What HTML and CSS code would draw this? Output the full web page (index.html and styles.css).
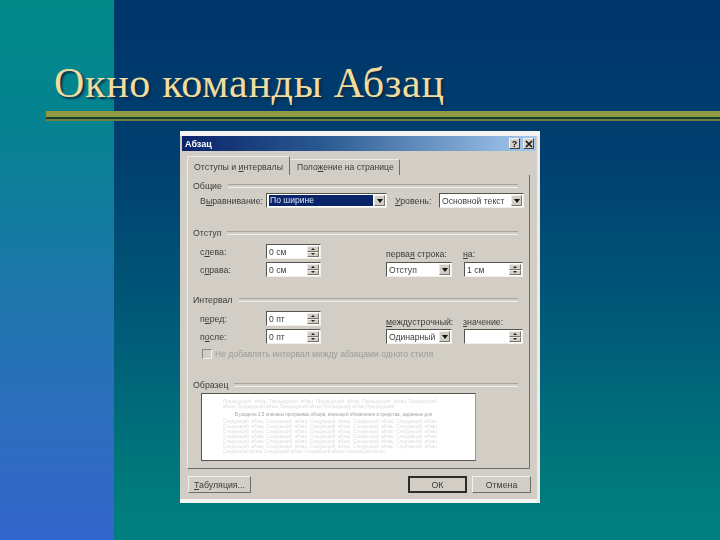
FILE: index.html
```html
<!DOCTYPE html>
<html lang="ru">
<head>
  <meta charset="UTF-8" />
  <title>Окно команды Абзац</title>
  <link rel="stylesheet" href="styles.css">
</head>

<body>
  <main class="slide">
    <div class="strip"></div>

    <div class="slide-content">
      <h1 class="slide-title">Окно команды Абзац</h1>
      <div class="rule"></div>

      <!-- Dialog -->
      <section class="dialog">
        <header class="titlebar">
          <span class="titlebar-text">Абзац</span>
          <span class="title-btn">?</span>
          <span class="title-btn title-close">
            <svg width="8" height="8" viewBox="0 0 8 8"><path d="M1 1 L7 7 M7 1 L1 7" stroke="#111" stroke-width="1.6" /></svg>
          </span>
        </header>

        <nav class="tabs">
          <span class="tab tab-active">Отступы и <u>и</u>нтервалы</span>
          <span class="tab">Поло<u>ж</u>ение на странице</span>
        </nav>

        <div class="panel">
          <!-- Общие -->
          <div class="group group-common">
            <div class="legend"><span>Общие</span></div>
            <div class="row-common">
              <label class="label-align">В<u>ы</u>равнивание:</label>
              <div class="combo combo-align">
                <span class="combo-value selected">По ширине</span>
                <span class="arrow"></span>
              </div>
              <label class="label-level"><u>У</u>ровень:</label>
              <div class="combo combo-level">
                <span class="combo-value">Основной текст</span>
                <span class="arrow"></span>
              </div>
            </div>
          </div>

          <!-- Отступ -->
          <div class="group group-indent">
            <div class="legend"><span>Отступ</span></div>
            <div class="fields">
              <div class="fields-left">
                <div class="field">
                  <label>с<u>л</u>ева:</label>
                  <div class="spin"><span class="spin-value">0 см</span><span class="spin-btns"><i class="up"></i><i class="down"></i></span></div>
                </div>
                <div class="field">
                  <label>с<u>п</u>рава:</label>
                  <div class="spin"><span class="spin-value">0 см</span><span class="spin-btns"><i class="up"></i><i class="down"></i></span></div>
                </div>
              </div>
              <div class="fields-right">
                <div class="captions">
                  <label class="caption-first">перва<u>я</u> строка:</label>
                  <label><u>н</u>а:</label>
                </div>
                <div class="controls">
                  <div class="combo combo-small">
                    <span class="combo-value">Отступ</span>
                    <span class="arrow"></span>
                  </div>
                  <div class="spin"><span class="spin-value">1 см</span><span class="spin-btns"><i class="up"></i><i class="down"></i></span></div>
                </div>
              </div>
            </div>
          </div>

          <!-- Интервал -->
          <div class="group group-spacing">
            <div class="legend"><span>Интервал</span></div>
            <div class="fields">
              <div class="fields-left">
                <div class="field">
                  <label>п<u>е</u>ред:</label>
                  <div class="spin"><span class="spin-value">0 пт</span><span class="spin-btns"><i class="up"></i><i class="down"></i></span></div>
                </div>
                <div class="field">
                  <label>п<u>о</u>сле:</label>
                  <div class="spin"><span class="spin-value">0 пт</span><span class="spin-btns"><i class="up"></i><i class="down"></i></span></div>
                </div>
              </div>
              <div class="fields-right fields-right-low">
                <div class="captions">
                  <label class="caption-first"><u>м</u>еждустрочный:</label>
                  <label><u>з</u>начение:</label>
                </div>
                <div class="controls">
                  <div class="combo combo-small">
                    <span class="combo-value">Одинарный</span>
                    <span class="arrow"></span>
                  </div>
                  <div class="spin"><span class="spin-value"></span><span class="spin-btns"><i class="up"></i><i class="down"></i></span></div>
                </div>
              </div>
            </div>
            <div class="check-row">
              <span class="checkbox"></span>
              <span class="check-text">Не добавлять интервал между абзацами одного стиля</span>
            </div>
          </div>

          <!-- Образец -->
          <div class="group">
            <div class="legend"><span>Образец</span></div>
            <div class="preview">
              <p class="preview-prev">Предыдущий абзац Предыдущий абзац Предыдущий абзац Предыдущий абзац Предыдущий абзац Предыдущий абзац Предыдущий абзац Предыдущий абзац Предыдущий</p>
              <p class="preview-cur">В разделе 2.5 описаны программы обзора, имеющей обновления и средства, заданные для</p>
              <p class="preview-next">Следующий абзац Следующий абзац Следующий абзац Следующий абзац Следующий абзац Следующий абзац Следующий абзац Следующий абзац Следующий абзац Следующий абзац Следующий абзац Следующий абзац Следующий абзац Следующий абзац Следующий абзац Следующий абзац Следующий абзац Следующий абзац Следующий абзац Следующий абзац Следующий абзац Следующий абзац Следующий абзац Следующий абзац Следующий абзац Следующий абзац Следующий абзац Следующий абзац Следующий абзац Следующий абзац Следующий абзац Следующий абзац Следующий абзац Следующий абзац</p>
            </div>
          </div>
        </div>

        <footer class="dialog-footer">
          <button class="btn btn-tabs"><u>Т</u>абуляция...</button>
          <button class="btn btn-default">ОК</button>
          <button class="btn">Отмена</button>
        </footer>
      </section>
    </div>
  </main>
</body>
</html>
```

FILE: styles.css
```css
* {
  box-sizing: border-box;
  margin: 0;
  padding: 0;
}

body {
  width: 720px;
  height: 540px;
  overflow: hidden;
  font-family: 'Liberation Sans', sans-serif;
}

.slide {
  display: flex;
  width: 720px;
  height: 540px;
  background: linear-gradient(180deg, #00356a 0%, #004070 30%, #005a78 60%, #007a7c 90%, #008080 100%);
}

.strip {
  flex: none;
  width: 114px;
  margin-right: -114px;
  background: linear-gradient(180deg, #008a88 0%, #058390 22%, #1a78a8 50%, #2c6ebc 75%, #3366cc 100%);
}

.slide-content {
  flex: 1;
  min-width: 0;
  display: flex;
  flex-direction: column;
}

.slide-title {
  height: 111px;
  padding: 61px 0 0 54px;
  font-family: 'Liberation Serif', serif;
  font-size: 42px;
  line-height: 44px;
  font-weight: 400;
  letter-spacing: 0.7px;
  color: #efdc9e;
  text-shadow: 2px 2px 2px #0a2b45;
  white-space: nowrap;
}

/* Olive line under the title */
.rule {
  height: 10px;
  margin-left: 46px;
  border-top: 6px solid #929a42;
  border-bottom: 2px solid #70803f;
  background: #13402f;
}

.dialog {
  display: flex;
  flex-direction: column;
  width: 360px;
  height: 372px;
  margin: 10px 0 0 180px;
  padding: 5px 4px 3px 1px;
  border-bottom: 1px solid #f2f2ee;
  background: #d2cec6;
  box-shadow: inset 0 5px 0 #f4f4f0, inset -3px 0 0 #ecebe6, inset 0 -3px 0 #f4f4f0;
  color: #3c3c3c;
  font-size: 8.5px;
  line-height: 12px;
  filter: blur(0.5px);
}

.titlebar {
  flex: none;
  display: flex;
  align-items: center;
  gap: 3px;
  height: 15px;
  margin-left: 1px;
  padding: 0 2px 0 3px;
  background: linear-gradient(90deg, #0a246a 0%, #2a5a92 40%, #a6caf0 100%);
}

.titlebar-text {
  flex: 1;
  color: #fff;
  font-weight: 700;
  font-size: 9px;
}

.title-btn {
  display: flex;
  align-items: center;
  justify-content: center;
  width: 11px;
  height: 11px;
  background: #d4d0c8;
  border: 1px solid;
  border-color: #f4f4f0 #404040 #404040 #f4f4f0;
  color: #111;
  font-weight: 700;
  font-size: 9px;
}

.tabs {
  flex: none;
  display: flex;
  align-items: flex-end;
  height: 24px;
  margin-left: 6px;
}

.tab {
  flex: none;
  width: 110px;
  height: 16px;
  padding: 1px 0 0 7px;
  border-right: 1px solid #6e6e6a;
  border-top: 1px solid #ecebe6;
  white-space: nowrap;
  font-size: 8.6px;
}

.tab-active {
  width: 103px;
  height: 19px;
  padding: 4px 0 0 6px;
  border-left: 1px solid #ecebe6;
  border-radius: 2px 2px 0 0;
  font-size: 8.8px;
}

.panel {
  flex: none;
  width: 343px;
  height: 294px;
  margin-left: 6px;
  padding: 5px 11px 0 5px;
  border: 1px solid;
  border-color: #ecebe6 #6e6e6a #6e6e6a #ecebe6;
  border-top: none;
  font-size: 8.8px;
}

.group-common {
  height: 47px;
}

.group-indent {
  height: 67px;
}

.group-spacing {
  height: 85px;
}

.legend {
  display: flex;
  align-items: center;
  gap: 6px;
  height: 12px;
}

.legend::after {
  content: '';
  flex: 1;
  height: 2px;
  border-top: 1px solid #a8a49c;
  border-bottom: 1px solid #f0efea;
}

.row-common {
  display: flex;
  align-items: center;
  margin-top: 1px;
  padding-left: 7px;
}

.label-align {
  flex: none;
  width: 66px;
}

.label-level {
  flex: none;
  width: 44px;
  margin-left: 8px;
}

.combo {
  flex: none;
  display: flex;
  align-items: center;
  height: 15px;
  padding: 1px 1px 1px 2px;
  background: #fff;
  border: 1px solid;
  border-color: #55554f #f0efea #f0efea #55554f;
}

.combo-align {
  width: 121px;
}

.combo-level {
  width: 85px;
}

.combo-small {
  width: 66px;
}

.combo-value {
  flex: 1;
  min-width: 0;
  white-space: nowrap;
  font-size: 8.6px;
}

.combo-value.selected {
  height: 100%;
  margin-right: 1px;
  padding-left: 1px;
  background: #0a246a;
  color: #d8e6f8;
  line-height: 11px;
}

.arrow {
  flex: none;
  position: relative;
  width: 11px;
  height: 100%;
  background: #d2cec6;
  border: 1px solid;
  border-color: #ecebe6 #77776f #77776f #ecebe6;
}

.arrow::after {
  content: '';
  position: absolute;
  left: 2px;
  top: 3px;
  border: 3px solid transparent;
  border-top: 4px solid #111;
  border-bottom: none;
}

.fields {
  display: flex;
  padding-left: 7px;
  align-items: flex-start;
}

.group-indent .fields {
  margin-top: 5px;
}

.group-spacing .fields {
  margin-top: 5px;
}

.fields-left {
  flex: none;
  display: flex;
  flex-direction: column;
  gap: 3px;
  width: 186px;
}

.field {
  display: flex;
  align-items: center;
}

.field label {
  flex: none;
  width: 66px;
}

.fields-right {
  flex: none;
  margin-top: 4px;
}

.fields-right-low {
  margin-top: 5px;
}

.captions {
  display: flex;
  height: 12px;
  margin-bottom: 2px;
}

.fields-right-low .captions {
  margin-bottom: 1px;
}

.caption-first {
  width: 77px;
  white-space: nowrap;
}

.controls {
  display: flex;
  gap: 12px;
}

.spin {
  flex: none;
  display: flex;
  width: 55px;
  height: 15px;
  padding: 1px 1px 1px 2px;
  background: #fff;
  border: 1px solid;
  border-color: #55554f #f0efea #f0efea #55554f;
}

.controls .spin {
  width: 59px;
}

.spin-value {
  flex: 1;
  font-size: 8.6px;
}

.spin-btns {
  flex: none;
  display: flex;
  flex-direction: column;
  width: 12px;
}

.spin-btns i {
  flex: 1;
  display: flex;
  align-items: center;
  justify-content: center;
  background: #d2cec6;
  border: 1px solid;
  border-color: #ecebe6 #77776f #77776f #ecebe6;
}

.spin-btns i::after {
  content: '';
  border: 2px solid transparent;
}

.spin-btns .up::after {
  border-bottom: 2px solid #222;
  border-top: none;
}

.spin-btns .down::after {
  border-top: 2px solid #222;
  border-bottom: none;
}

.check-row {
  display: flex;
  align-items: center;
  gap: 3px;
  margin: 4px 0 0 9px;
}

.checkbox {
  flex: none;
  width: 10px;
  height: 10px;
  background: #d2cec6;
  border: 1px solid;
  border-color: #8a8780 #f0efea #f0efea #8a8780;
}

.check-text {
  color: #9c9a92;
  white-space: nowrap;
  font-size: 8.6px;
}

.preview {
  width: 275px;
  height: 68px;
  margin: 2px 0 0 8px;
  padding: 5px 38px 0 21px;
  overflow: hidden;
  background: #fff;
  border: 1px solid;
  border-color: #55554f #9a9a94 #55554f #55554f;
  font-size: 4.6px;
  line-height: 5px;
  color: #dcdcdc;
  text-align: justify;
}

.preview-cur {
  margin: 3px 0 2px;
  text-indent: 12px;
  color: #a4a4a4;
  white-space: nowrap;
  overflow: hidden;
}

.dialog-footer {
  flex: none;
  display: flex;
  gap: 5px;
  margin-top: 7px;
  padding: 0 5px 0 7px;
}

.btn {
  width: 59px;
  height: 17px;
  background: #d2cec6;
  border: 1px solid;
  border-color: #f0efea #6e6e6a #6e6e6a #f0efea;
  color: #3c3c3c;
  font-family: inherit;
  font-size: 8.8px;
}

.btn-tabs {
  width: 63px;
  margin-right: auto;
}

.btn-default {
  border: 2px solid #2c2c2a;
}
```
